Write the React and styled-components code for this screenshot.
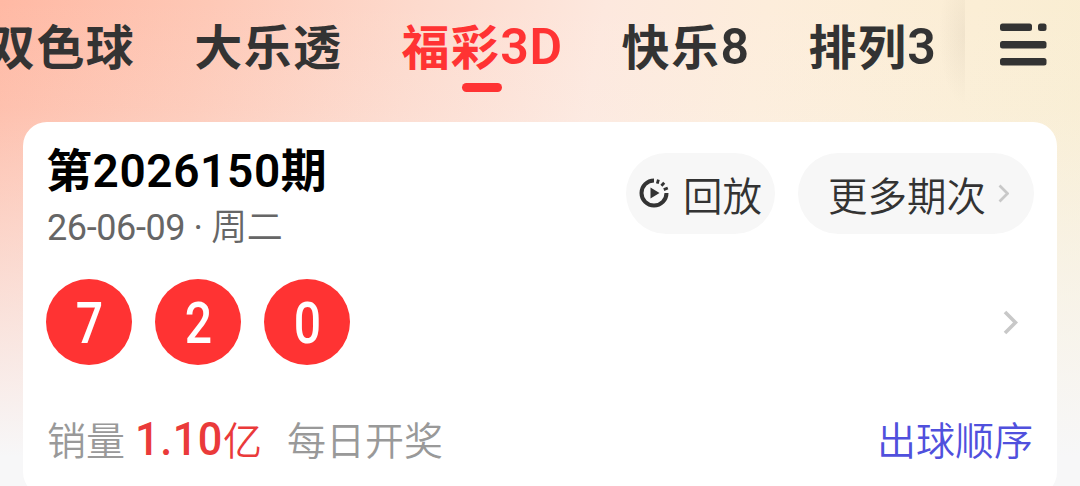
import React from 'react';
import styled, { createGlobalStyle } from 'styled-components';

const GlobalStyle = createGlobalStyle`
  * {
    box-sizing: border-box;
  }

  body {
    margin: 0;
    overflow: hidden;
    font-family: Roboto, "Noto Sans CJK SC", sans-serif;
    color: #333333;
  }
`;

const Page = styled.div`
  height: 486px;
  overflow: hidden;
  background:
    linear-gradient( 180deg, rgba( 247, 247, 248, 0 ) 0%, rgba( 247, 247, 248, 0.1 ) 22%, #f7f7f8 94% ),
    linear-gradient( 100deg, #ffb9a4 0%, #fec8b6 18%, #fddacd 36%, #fde8de 52%, #fdeddb 66%, #fbeed5 84%, #f8edd0 100% );
`;

const Header = styled.header`
  display: flex;
  height: 122px;
`;

const Tabs = styled.nav`
  flex: none;
  display: flex;
  gap: 59px;
  width: 965px;
  overflow: hidden;
  background: radial-gradient( 26px 70px at 100% 35px, rgba( 120, 100, 80, 0.08 ), transparent );
`;

const Tab = styled.div`
  flex: none;
  display: flex;
  flex-direction: column;
  align-items: center;
  margin-left: ${( props ) => props.$shift || 0}px;
  padding-top: 15px;
  font-size: 48px;
  line-height: 68px;
  letter-spacing: 1.4px;
  font-weight: 600;
  white-space: nowrap;
  color: ${( props ) => props.$active ? '#ff3333' : '#333333'};

  &::after {
    content: '';
    width: 40px;
    height: 9px;
    border-radius: 5px;
    background: ${( props ) => props.$active ? '#ff3333' : 'transparent'};
  }
`;

const Latin = styled.span`
  font-size: 50px;
  line-height: 1;
  letter-spacing: 0.6px;
  vertical-align: 1px;
`;

const MenuIcon = styled.svg`
  flex: none;
  width: 48px;
  height: 44px;
  margin: 23px 0 0 35px;
`;

const Card = styled.section`
  width: 1034px;
  height: 374px;
  margin-left: 23px;
  padding: 24px 24px 0;
  border-radius: 24px;
  background: #fff;
`;

const CardHead = styled.div`
  display: flex;
  justify-content: space-between;
  height: 133px;
  margin-right: -1px;
`;

const Issue = styled.h1`
  margin: -1px 0 0 -1px;
  font-size: 46px;
  line-height: 52px;
  letter-spacing: 0.6px;
  font-weight: 600;
  color: #000;
`;

const DrawDate = styled.div`
  padding-top: 3px;
  font-size: 36px;
  line-height: 56px;
  letter-spacing: -0.4px;
  color: #666666;
`;

const Weekday = styled.span`
  font-weight: 350;
`;

const Actions = styled.div`
  display: flex;
  gap: 23px;
  padding-top: 7px;
`;

const Pill = styled.button`
  display: flex;
  align-items: center;
  width: ${( props ) => props.$width}px;
  height: 81px;
  padding: 0 0 0 ${( props ) => props.$indent}px;
  border: 0;
  border-radius: 41px;
  background: #f7f7f7;
  font: 350 39.5px/79px "Noto Sans CJK SC", sans-serif;
  color: #333333;
  white-space: nowrap;
`;

const ReplayIcon = styled.svg`
  flex: none;
  width: 30px;
  height: 30px;
  margin: -2px 14px 0 0;
`;

const Chevron = styled.svg`
  flex: none;
  width: ${( props ) => props.$size * 0.6}px;
  height: ${( props ) => props.$size}px;
  margin-left: ${( props ) => props.$gap || 0}px;
`;

const Balls = styled.div`
  display: flex;
  align-items: center;
  gap: 23px;
  height: 86px;
  margin-left: -1px;
  padding-right: 15px;

  svg {
    margin-left: auto;
  }
`;

const Ball = styled.div`
  width: 86px;
  height: 86px;
  border-radius: 50%;
  background: #ff3333;
  color: #fff;
  font-size: 58px;
  line-height: 88px;
  font-weight: 500;
  text-align: center;
`;

const Digit = styled.span`
  display: inline-block;
  transform: scaleX( 0.83 );
`;

const Footer = styled.div`
  display: flex;
  align-items: baseline;
  margin-top: 44px;
  font: 350 39px/58px "Noto Sans CJK SC", sans-serif;
  color: #999999;
  white-space: nowrap;
`;

const Amount = styled.span`
  display: flex;
  align-items: baseline;
  margin: 0 25px 0 10px;
  color: #ea3a3a;

  b {
    width: 88px;
    font: 500 47px/58px Roboto, sans-serif;
    letter-spacing: 0.6px;
    transform: scaleX( 0.92 );
    transform-origin: left;
  }
`;

const OrderLink = styled.a`
  margin-left: auto;
  color: #5050dd;
`;

const tabs = [
  { name: '双色球', shift: -13 },
  { name: '大乐透' },
  { name: '福彩', latin: '3D', active: true },
  { name: '快乐', latin: '8' },
  { name: '排列', latin: '3' },
];

function Arrow({ size, gap }) {
  return (
    <Chevron $size={size} $gap={gap} viewBox="0 0 15 25">
      <path d="M2 2L12.5 12.5L2 23" fill="none" stroke="#c8c8c8" strokeWidth="3.6" />
    </Chevron>
  );
}

function App() {
  return (
    <Page>
      <GlobalStyle />
      <Header>
        <Tabs>
          { tabs.map(({ name, latin, shift, active }) => (
            <Tab key={name} $shift={shift} $active={active}>
              <span>{name}{ latin && <Latin>{latin}</Latin> }</span>
            </Tab>
          ))}
        </Tabs>
        <MenuIcon viewBox="0 0 48 44" fill="#333333">
          <rect x="0" y="0.5" width="32" height="7.5" rx="2.5" />
          <rect x="38" y="0.5" width="8.5" height="7.5" rx="2.5" />
          <rect x="0" y="18" width="46.5" height="7.5" rx="2.5" />
          <rect x="0" y="35" width="46.5" height="7.5" rx="2.5" />
        </MenuIcon>
      </Header>
      <Card>
        <CardHead>
          <div>
            <Issue>第2026150期</Issue>
            <DrawDate>26-06-09 · <Weekday>周二</Weekday></DrawDate>
          </div>
          <Actions>
            <Pill $width={149} $indent={13}>
              <ReplayIcon viewBox="0 0 30 30">
                <path d="M15 2.5A12.5 12.5 0 1 0 27.5 15" fill="none" stroke="#333333" strokeWidth="4" />
                <path d="M18.3 5.6L19.4 1.6M22.4 7.8L25.2 4.8M24.8 11.6L28.8 10" fill="none" stroke="#333333" strokeWidth="2.8" />
                <path d="M11.5 9.5L20.5 15L11.5 20.5Z" fill="#333333" />
              </ReplayIcon>
              回放
            </Pill>
            <Pill $width={236} $indent={30}>
              更多期次
              <Arrow size={19} gap={12} />
            </Pill>
          </Actions>
        </CardHead>
        <Balls>
          { ['7', '2', '0'].map(( n ) => (
            <Ball key={n}><Digit>{n}</Digit></Ball>
          ))}
          <Arrow size={25} />
        </Balls>
        <Footer>
          <span>销量</span>
          <Amount><b>1.10</b>亿</Amount>
          <span>每日开奖</span>
          <OrderLink>出球顺序</OrderLink>
        </Footer>
      </Card>
    </Page>
  );
}

export default App;
